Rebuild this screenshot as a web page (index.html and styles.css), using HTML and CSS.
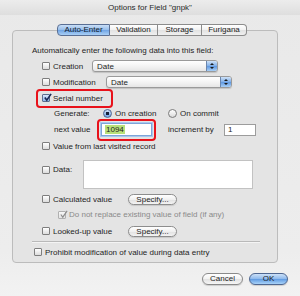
FILE: index.html
```html
<!DOCTYPE html>
<html lang="en">
<head>
    <meta charset="UTF-8">
    <title>Options for Field "gnpk"</title>
    <link rel="stylesheet" href="styles.css">
</head>
<body>
    <div class="window">
        <div class="titlebar">Options for Field "gnpk"</div>

        <div class="tabs">
            <span class="tab tab-auto active">Auto-Enter</span>
            <span class="tab tab-valid">Validation</span>
            <span class="tab tab-storage">Storage</span>
            <span class="tab tab-furi">Furigana</span>
        </div>

        <div class="group">
            <div class="row intro">Automatically enter the following data into this field:</div>

            <div class="row opt">
                <span class="check"></span>
                <span class="label lbl-creation">Creation</span>
                <span class="popup">Date<span class="stepper"></span></span>
            </div>

            <div class="row opt">
                <span class="check"></span>
                <span class="label lbl-mod">Modification</span>
                <span class="popup">Date<span class="stepper"></span></span>
            </div>

            <div class="row opt">
                <span class="mark mark-serial">
                    <span class="check checked">
                        <svg viewBox="0 0 10 10"><path d="M2 5 L4.2 8 L9 1" /></svg>
                    </span>
                    <span class="label">Serial number</span>
                </span>
            </div>

            <div class="row sub">
                <span class="sub-label">Generate:</span>
                <span class="radio on"></span>
                <span class="label lbl-oncreation">On creation</span>
                <span class="radio"></span>
                <span class="label">On commit</span>
            </div>

            <div class="row sub sub-next">
                <span class="sub-label lbl-next">next value</span>
                <span class="mark mark-field">
                    <span class="field focus"><span class="sel">1094</span></span>
                </span>
                <span class="label lbl-incr">increment by</span>
                <span class="field small">1</span>
            </div>

            <div class="row opt">
                <span class="check"></span>
                <span class="label">Value from last visited record</span>
            </div>

            <div class="row opt data-row">
                <span class="check"></span>
                <span class="label lbl-data">Data:</span>
                <span class="textbox"></span>
            </div>

            <div class="row opt calc-row">
                <span class="check"></span>
                <span class="label lbl-calc">Calculated value</span>
                <span class="pill">Specify...</span>
            </div>

            <div class="row replace">
                <span class="check dim checked">
                    <svg viewBox="0 0 10 10"><path d="M2 5 L4.2 8 L9 1" /></svg>
                </span>
                <span class="label">Do not replace existing value of field (if any)</span>
            </div>

            <div class="row opt">
                <span class="check"></span>
                <span class="label lbl-calc">Looked-up value</span>
                <span class="pill">Specify...</span>
            </div>

            <div class="separator"></div>

            <div class="row prohibit">
                <span class="check"></span>
                <span class="label">Prohibit modification of value during data entry</span>
            </div>
        </div>

        <div class="footer">
            <span class="button cancel">Cancel</span>
            <span class="button ok">OK</span>
        </div>
    </div>
</body>
</html>
```

FILE: styles.css
```css
* {
    box-sizing: border-box;
}
body {
    margin: 0;
    background-color: #ececec;
    font-family: "Liberation Sans", Arial, sans-serif;
    font-size: 8px;
    color: #1e1e1e;
}
.window {
    width: 300px;
    height: 296px;
    background: linear-gradient(#e9e9e9, #ededed 85%, #f2f2f2);
    overflow: hidden;
}
.titlebar {
    height: 15px;
    line-height: 15px;
    text-align: center;
    font-size: 8px;
    color: #2a2a2a;
    background: linear-gradient(#ececec, #dedede);
}

/* segmented tabs */
.tabs {
    position: relative;
    z-index: 2;
    display: flex;
    margin: 9px 0 -6px 57px;
    height: 12px;
}
.tab {
    height: 12px;
    line-height: 10px;
    text-align: center;
    border: 1px solid #8c8c8c;
    border-left: none;
    background: linear-gradient(#ffffff, #f1f1f1 50%, #e2e2e2 51%, #f0f0f0);
    color: #222;
}
.tab-auto {
    width: 53px;
    border-left: 1px solid #6f7f9a;
    border-radius: 4px 0 0 4px;
}
.tab-valid { width: 48px; }
.tab-storage { width: 44px; }
.tab-furi {
    width: 45px;
    border-radius: 0 4px 4px 0;
}
.tab.active {
    background: linear-gradient(#c9def6, #95bdeb 50%, #6fa3e3 51%, #a9d0f7);
    border-color: #5a6f94;
    color: #0e1a2e;
}

/* group box */
.group {
    margin-left: 12px;
    width: 266px;
    height: 233px;
    border: 1px solid #bcbcbc;
    border-radius: 4px;
    background-color: #e4e4e4;
    padding: 11px 0 0 19px;
}
.row {
    display: flex;
    align-items: center;
    height: 16px;
    white-space: nowrap;
}
.opt {
    margin-left: 10px;
}
.check {
    width: 8px;
    height: 8px;
    flex: none;
    border: 1px solid #7e7e7e;
    border-radius: 1px;
    background: linear-gradient(#ffffff, #dcdcdc);
    margin-right: 3px;
    position: relative;
}
.check svg {
    position: absolute;
    left: 0;
    top: -2px;
    width: 9px;
    height: 9px;
    fill: none;
    stroke: #1a2a55;
    stroke-width: 1.8;
}
.check.checked {
    background: linear-gradient(#d9e8fb, #8fb7ea);
    border-color: #5d6f8f;
}
.check.dim {
    background: linear-gradient(#f7f7f7, #e4e4e4);
    border-color: #b0b0b0;
}
.check.dim svg {
    stroke: #8d8d8d;
    stroke-width: 1.3;
}
.label {
    color: #1e1e1e;
}
.lbl-creation { width: 39px; }
.lbl-mod { width: 53px; }
.popup {
    display: flex;
    align-items: center;
    position: relative;
    width: 126px;
    height: 12px;
    padding-left: 4px;
    border: 1px solid #9a9a9a;
    border-radius: 3px;
    background: linear-gradient(#ffffff, #f4f4f4 50%, #e6e6e6);
    box-shadow: 0 1px 1px rgba(0, 0, 0, 0.15);
}
.stepper {
    margin-left: auto;
    width: 11px;
    height: 10px;
    border-left: 1px solid #6b86ad;
    border-radius: 0 2px 2px 0;
    background: linear-gradient(#cfe2f8, #7eaee8 50%, #5d96df 51%, #a8cff6);
    position: relative;
}
.stepper::before,
.stepper::after {
    content: "";
    position: absolute;
    left: 3px;
    border-left: 2px solid transparent;
    border-right: 2px solid transparent;
}
.stepper::before {
    top: 2px;
    border-bottom: 2px solid #1a1a1a;
}
.stepper::after {
    bottom: 2px;
    border-top: 2px solid #1a1a1a;
}

/* red annotation rings */
.mark {
    display: flex;
    align-items: center;
    border: 2px solid #e8121b;
    border-radius: 4px;
    flex: none;
}
.mark-serial {
    height: 19px;
    margin-left: -6px;
    padding: 0 8px 0 4px;
}
.mark-field {
    width: 59px;
    height: 22px;
    padding: 0 2px;
    margin-left: 0;
}

/* generate / next value */
.sub {
    margin-left: 22px;
    height: 15px;
}
.sub-next {
    height: 17px;
}
.sub-label {
    width: 49px;
}
.lbl-next {
    width: 43px;
}
.radio {
    width: 9px;
    height: 9px;
    flex: none;
    border: 1px solid #7b7b7b;
    border-radius: 50%;
    background: linear-gradient(#ffffff, #dadada);
    margin-right: 3px;
    position: relative;
}
.radio.on {
    border-color: #4e6590;
    background: radial-gradient(circle, #15203a 0, #15203a 1.6px, transparent 2px), linear-gradient(#cfe1f8, #6ea2e3);
}
.lbl-oncreation {
    width: 53px;
}
.field {
    display: flex;
    align-items: center;
    height: 13px;
    border: 1px solid #8f8f8f;
    background-color: #fff;
    padding-left: 3px;
}
.field.focus {
    width: 51px;
    border-color: #7fa5d8;
    box-shadow: 0 0 0 1px #a9c8ef;
}
.sel {
    background-color: #b8e07a;
    padding: 0 1px;
    line-height: 9px;
}
.lbl-incr {
    margin-left: 12px;
    width: 56px;
}
.field.small {
    width: 32px;
    height: 12px;
    border-color: #9c9c9c;
}

/* data / calculated / looked-up */
.data-row {
    margin-top: 6px;
    height: 29px;
    align-items: flex-start;
}
.data-row .check {
    margin-top: 6px;
}
.data-row .label {
    margin-top: 5px;
}
.lbl-data {
    width: 30px;
}
.textbox {
    width: 170px;
    height: 29px;
    background-color: #fff;
    border: 1px solid #c2c2c2;
}
.calc-row {
    margin-top: 3px;
    height: 14px;
}
.lbl-calc {
    width: 75px;
}
.pill {
    width: 49px;
    height: 11px;
    line-height: 9px;
    text-align: center;
    border: 1px solid #8d8d8d;
    border-radius: 6px;
    background: linear-gradient(#ffffff, #f0f0f0 50%, #e1e1e1 51%, #f3f3f3);
    box-shadow: 0 1px 1px rgba(0, 0, 0, 0.12);
}
.replace {
    margin-left: 26px;
    height: 17px;
}
.replace .label {
    color: #8a8a8a;
}
.separator {
    margin-top: 2px;
    width: 228px;
    height: 1px;
    background-color: #b9b9b9;
    box-shadow: 0 1px 0 #f4f4f4;
}
.prohibit {
    margin-top: 3px;
    margin-left: 2px;
    height: 14px;
}

/* buttons */
.footer {
    display: flex;
    justify-content: flex-end;
    gap: 6px;
    padding-right: 12px;
    margin-top: 10px;
}
.button {
    height: 12px;
    line-height: 10px;
    text-align: center;
    border-radius: 7px;
    border: 1px solid #8a8a8a;
    box-shadow: 0 1px 1px rgba(0, 0, 0, 0.15);
}
.cancel {
    width: 41px;
    background: linear-gradient(#ffffff, #f2f2f2 50%, #e2e2e2 51%, #f6f6f6);
}
.ok {
    width: 39px;
    border-color: #4f6791;
    background: linear-gradient(#cde1f8, #8cb8ec 50%, #5f9ae2 51%, #a9d3f8);
}
```
